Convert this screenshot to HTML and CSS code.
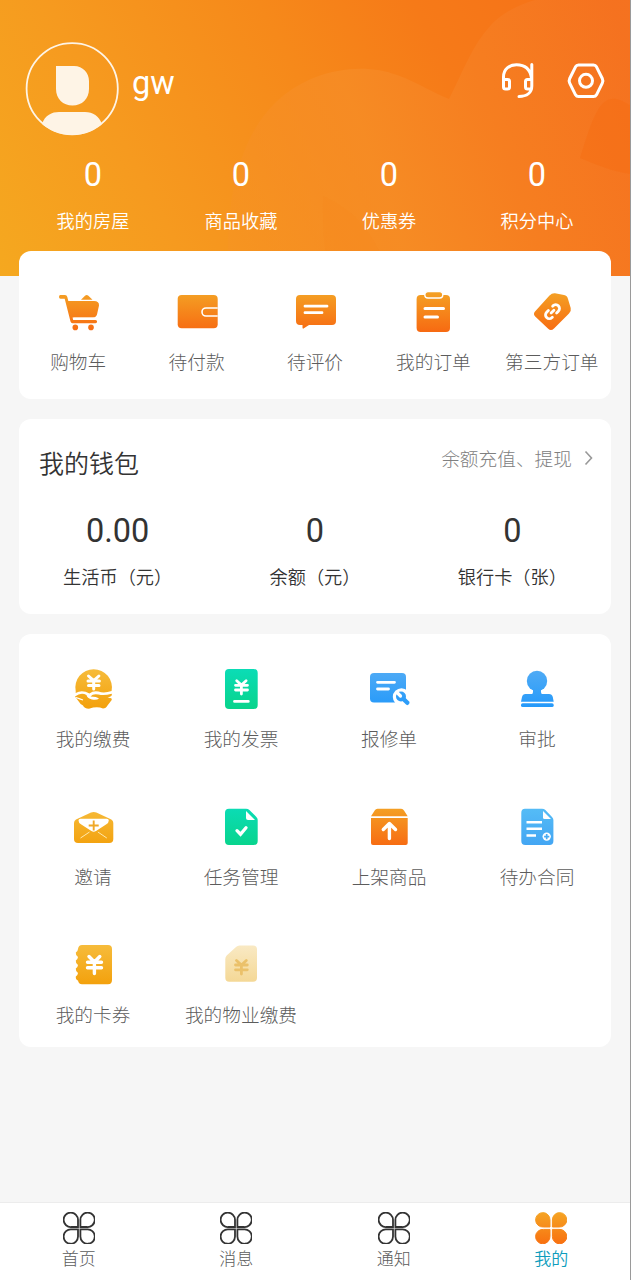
FILE: index.html
```html
<!DOCTYPE html>
<html lang="zh-CN">
<head>
<meta charset="utf-8">
<title>我的</title>
<link rel="stylesheet" href="styles.css">
</head>
<body>
<svg class="defs" width="0" height="0" aria-hidden="true">
  <defs>
    <linearGradient id="or" gradientUnits="userSpaceOnUse" x1="0" y1="5" x2="0" y2="43"><stop offset="0" stop-color="#f4a024"/><stop offset="1" stop-color="#f76b12"/></linearGradient>
    <linearGradient id="ye" gradientUnits="userSpaceOnUse" x1="0" y1="5" x2="0" y2="43"><stop offset="0" stop-color="#f6bb3a"/><stop offset="1" stop-color="#f3a10d"/></linearGradient>
    <linearGradient id="gr" gradientUnits="userSpaceOnUse" x1="0" y1="5" x2="0" y2="43"><stop offset="0" stop-color="#0bdcb5"/><stop offset="1" stop-color="#08d48c"/></linearGradient>
    <linearGradient id="bl" gradientUnits="userSpaceOnUse" x1="0" y1="5" x2="0" y2="43"><stop offset="0" stop-color="#50abf5"/><stop offset="1" stop-color="#2499fa"/></linearGradient>
    <linearGradient id="sk" gradientUnits="userSpaceOnUse" x1="0" y1="5" x2="0" y2="43"><stop offset="0" stop-color="#55bcf6"/><stop offset="1" stop-color="#43a5f3"/></linearGradient>
    <linearGradient id="sa" gradientUnits="userSpaceOnUse" x1="0" y1="5" x2="0" y2="43"><stop offset="0" stop-color="#f9e9c3"/><stop offset="1" stop-color="#f4d793"/></linearGradient>
    <linearGradient id="nv" gradientUnits="userSpaceOnUse" x1="0" y1="0" x2="0" y2="32"><stop offset="0" stop-color="#f5a524"/><stop offset="1" stop-color="#f87010"/></linearGradient>
    <linearGradient id="cloud" gradientUnits="userSpaceOnUse" x1="229" y1="200" x2="631" y2="60"><stop offset="0" stop-color="#f6912a" stop-opacity=".25"/><stop offset=".35" stop-color="#f68d27" stop-opacity=".75"/><stop offset=".65" stop-color="#f67f22" stop-opacity=".8"/><stop offset="1" stop-color="#f57220" stop-opacity=".95"/></linearGradient>
    <g id="clover">
      <path d="M15 15H8.400A7.200 7.200 0 1 1 15 8z"/>
      <path d="M17.400 15H24A7.200 7.200 0 1 0 17.400 8z"/>
      <path d="M15 17.400H8.400A7.200 7.200 0 1 0 15 24.400z"/>
      <path d="M17.400 17.400H24A7.200 7.200 0 1 1 17.400 24.400z"/>
    </g>
  </defs>
</svg>
<div class="screen">
  <header class="hero">
    <svg class="hero-art" width="631" height="276" viewBox="0 0 631 276" aria-hidden="true">
      <path fill="url(#cloud)" d="M229 276C224 203 239 138 275 103C308 70 361 61 397 75C419 83 435 94 449 99C462 74 472 45 491 25C502 13 518 5 535 0H631V276Z"/>
      <path fill="#f66d12" fill-opacity=".45" d="M631 106C615 95 607 97 599 108C590 123 586 140 580 158C595 164 613 172 631 174Z"/>
      <path fill="#f6881a" fill-opacity=".25" d="M323 196C350 209 371 223 389 276H332C322 250 323 218 323 196Z"/>
    </svg>
    <div class="profile">
      <svg class="avatar" width="94" height="94" viewBox="0 0 94 94">
        <clipPath id="face"><circle cx="47" cy="47" r="46"/></clipPath>
        <path clip-path="url(#face)" fill="#fef4e6" d="M31 24H49C58 24 64 31 64 39V47C64 57 57 63.500 47.500 63.500S31 57 31 47ZM17 82C20 73 27 70 34 70H60C68 70 74 74 77 82V94H17Z"/>
        <circle cx="47.200" cy="46.700" r="45.600" fill="none" stroke="#fef4e6" stroke-width="1.800"/>
      </svg>
      <span class="name">gw</span>
      <svg class="tool" width="36" height="40" viewBox="0 0 36 40" fill="none" stroke="#fff" stroke-width="3" stroke-linecap="round" stroke-linejoin="round">
        <path d="M3.500 20V16C3.500 8 9.500 3.800 16.500 3.800C24 3.800 30 7 31.500 17M31.800 3.500V25C31.800 31.500 27 35.500 19 35.500M3.500 18.500H7.500Q9.500 18.500 9.500 20.500V26Q9.500 28 7.500 28H5.500Q3.500 28 3.500 26ZM31.500 18.500H27.500Q25.500 18.500 25.500 20.500V26Q25.500 28 27.500 28H29.500"/>
      </svg>
      <svg class="tool" width="40" height="40" viewBox="0 0 40 40" fill="none" stroke="#fff" stroke-width="3" stroke-linejoin="round">
        <path d="M12.500 4H27.500Q29.500 4 30.500 5.800L36.300 17.500Q37.400 19.800 36.300 22.100L30.500 33.800Q29.500 35.600 27.500 35.600H12.500Q10.500 35.600 9.500 33.800L3.700 22.100Q2.600 19.800 3.700 17.500L9.500 5.800Q10.500 4 12.500 4Z"/><circle cx="20" cy="19.800" r="6.500"/>
      </svg>
    </div>
    <div class="stats">
      <div class="stat"><b>0</b><span>我的房屋</span></div>
      <div class="stat"><b>0</b><span>商品收藏</span></div>
      <div class="stat"><b>0</b><span>优惠券</span></div>
      <div class="stat"><b>0</b><span>积分中心</span></div>
    </div>
  </header>
  <main class="cards">
    <section class="card orders">
      <div class="item"><svg class="icon" viewBox="0 0 48 48"><g fill="url(#or)"><path d="M31 7.700Q32.700 6.300 34.400 7.700L38.500 11.700H27ZM13 13H40Q45.300 13 45 17.500L43 26.500Q42 29.500 39 29.500H18ZM6 7H11Q12.800 7 13.300 9L19.200 32H41.500A1.600 1.600 0 0 1 41.500 35.200H18.500Q17 35.200 16.500 33.500L10.700 10.700H6.500Q5 10.500 5 9T6 7Z"/><circle cx="21.300" cy="39.400" r="2.800"/><circle cx="37" cy="39.400" r="2.800"/></g><path d="M19.500 30.400H40" stroke="#fff" stroke-width="1.600"/></svg><span>购物车</span></div>
      <div class="item"><svg class="icon" viewBox="0 0 48 48"><rect x="4.700" y="7" width="40" height="33.300" rx="4" fill="url(#or)"/><path d="M44.700 20H33A4 4 0 0 0 33 28H44.700" fill="none" stroke="#fff" stroke-width="1.600"/></svg><span>待付款</span></div>
      <div class="item"><svg class="icon" viewBox="0 0 48 48"><path fill="url(#or)" d="M9 7H41Q45 7 45 11V33Q45 37 41 37H18L12.500 40.500Q11.500 41 11.500 39.500V37H9Q5 37 5 33V11Q5 7 9 7Z"/><path d="M14 18.200H36M14 24.700H31" stroke="#fff" stroke-width="2.800" stroke-linecap="round"/></svg><span>待评价</span></div>
      <div class="item"><svg class="icon" viewBox="0 0 48 48"><rect x="7.600" y="7" width="33.400" height="37" rx="4" fill="url(#or)"/><rect x="15.800" y="3.600" width="18" height="6.400" rx="3.200" fill="url(#or)" stroke="#fff" stroke-width="1.400"/><path d="M16 20.600H34.500M16 29H28.500" stroke="#fff" stroke-width="3" stroke-linecap="round"/></svg><span>我的订单</span></div>
      <div class="item"><svg class="icon" viewBox="0 0 48 48"><path fill="url(#or)" d="M7 23.500L21.500 7.500Q24 5 27 5.300L36 7Q39.300 7.700 40 11L42.700 20Q43.500 23 41 25.500L26 40.500Q23 43.500 20.200 40.800L7.200 28.500Q4.800 26 7 23.500Z"/><g fill="none" stroke="#fff" stroke-width="2.800" stroke-linecap="round" transform="rotate(-45 24.500 23.700)"><path d="M20.500 27.500H20A3.800 3.800 0 0 1 20 19.900H22.500M28.500 19.900H29A3.800 3.800 0 0 1 29 27.500H26.500M22.500 23.700H26.500"/></g></svg><span>第三方订单</span></div>
    </section>

    <section class="card wallet">
      <div class="wallet-head">
        <h2>我的钱包</h2>
        <a class="more"><span>余额充值、提现</span><svg width="10" height="16" viewBox="0 0 10 16" fill="none" stroke="#999" stroke-width="1.600"><path d="M1.500 1.500L7.500 8L1.500 14.500"/></svg></a>
      </div>
      <div class="balances">
        <div class="balance"><b>0.00</b><span>生活币（元）</span></div>
        <div class="balance"><b>0</b><span>余额（元）</span></div>
        <div class="balance"><b>0</b><span>银行卡（张）</span></div>
      </div>
    </section>

    <section class="card services">
      <div class="item"><svg class="icon" viewBox="0 0 48 48"><path fill="url(#ye)" d="M6.700 26A18.300 18.300 0 1 1 42.600 26Q35 28.500 29.500 26.500Q24 25.500 20.500 28.500Q13 24.500 6.700 28Z"/><path fill="url(#ye)" d="M6 31.500Q12 27 17.500 30Q18 33 23 34.500Q28 35.300 30 33.500Q27.500 31.500 21.500 31.500Q24 28.300 29.500 29.500Q35 31 42.700 28.700Q44 31 38.500 32.700Q43.500 32.500 42.700 35L38.500 40.500Q37 43.500 34 43.500Q28 41 20 43.800Q15 43.500 14 40.500Q11 39 9 35.500Z"/><path d="M7 32.500Q11 34 14 35" fill="none" stroke="#fff" stroke-width="1.200"/><path d="M19.500 11L24.700 15.700L29.900 11M19 15.900H30.400M19.500 20.600H30M24.700 16V24" fill="none" stroke="#fff" stroke-width="3" stroke-linecap="round"/></svg><span>我的缴费</span></div>
      <div class="item"><svg class="icon" viewBox="0 0 48 48"><rect x="8" y="4" width="32.700" height="40" rx="4" fill="url(#gr)"/><path d="M19.700 15.700L24.400 20L29.100 15.700M18.500 20.300H30.500M18.500 25H30.500M24.400 20V29M17.500 36.400H31.300" fill="none" stroke="#fff" stroke-width="2.800" stroke-linecap="round"/></svg><span>我的发票</span></div>
      <div class="item"><svg class="icon" viewBox="0 0 48 48"><rect x="5" y="8" width="36" height="29.500" rx="4" fill="url(#bl)"/><path d="M12.500 17.300H29.500M12.500 24H23.500" stroke="#fff" stroke-width="2.800" stroke-linecap="round"/><circle cx="36.500" cy="32" r="8.700" fill="#fff"/><path d="M37 32.500L42.300 37.800" stroke="#2d9df9" stroke-width="4.400" stroke-linecap="round"/><circle cx="36" cy="31.500" r="5" fill="url(#bl)"/><path d="M35.500 31L32.500 28" stroke="#fff" stroke-width="3.200" stroke-linecap="round"/></svg><span>报修单</span></div>
      <div class="item"><svg class="icon" viewBox="0 0 48 48"><g fill="url(#bl)"><circle cx="24" cy="16" r="10.200"/><path d="M19 22H29Q27 26 28.700 29H36Q39 29 39.800 32L40.700 36.700H8L9 32Q9.700 29 12.500 29H19.300Q21 26 19 22Z"/><rect x="8" y="38.300" width="32.700" height="3.800" rx="1.700"/></g></svg><span>审批</span></div>
      <div class="item"><svg class="icon" viewBox="0 0 48 48"><path fill="url(#ye)" d="M7 16.500L22 9.500Q24.700 8.300 27.400 9.500L42.300 16.500Q44.300 17.500 44.300 20V36Q44.300 40 40.300 40H9Q5 40 5 36V20Q5 17.500 7 16.500Z"/><path fill="#fff" d="M11.500 15.700H37.800Q39.800 15.700 39.800 17.500Q39.800 20 37 21.500L27 28Q24.700 29.500 22.400 28L12.300 21.500Q9.500 20 9.500 17.500Q9.500 15.700 11.500 15.700Z"/><path d="M24.700 17.500V27.500M19.700 22.500H29.700" stroke="#f0a928" stroke-width="1.900"/><path d="M11.500 35L20.500 29M37.800 35L28.900 29" stroke="#ffe9ae" stroke-width="1"/></svg><span>邀请</span></div>
      <div class="item"><svg class="icon" viewBox="0 0 48 48"><path fill="url(#gr)" d="M12 5.700H29Q31 5.700 32.400 7L39.400 14Q40.700 15.300 40.700 17V38Q40.700 42 36.700 42H12Q8 42 8 38V9.700Q8 5.700 12 5.700Z"/><path fill="#fff" d="M29 8V15Q29 17 31 17H38Z"/><path d="M20 27.700L23.500 31.200L29 24.700" fill="none" stroke="#fff" stroke-width="3.300" stroke-linecap="round"/></svg><span>任务管理</span></div>
      <div class="item"><svg class="icon" viewBox="0 0 48 48"><path fill="url(#or)" d="M12.500 5.700H36.200Q38 5.700 39 7.500L42.700 13.200H6L9.700 7.500Q10.700 5.700 12.500 5.700ZM6 15H42.700V40Q42.700 42 40.700 42H8Q6 42 6 40Z"/><path d="M24.400 35.500V21M18.300 26.500L24.400 20.500L30.500 26.500" fill="none" stroke="#fff" stroke-width="3.400" stroke-linecap="round" stroke-linejoin="round"/></svg><span>上架商品</span></div>
      <div class="item"><svg class="icon" viewBox="0 0 48 48"><path fill="url(#sk)" d="M12 5.700H29Q31 5.700 32.400 7L39 14Q40.400 15.300 40.400 17V38Q40.400 42 36.400 42H12.300Q8.300 42 8.300 38V9.700Q8.300 5.700 12 5.700Z"/><path fill="#fff" d="M30 8V14.500Q30 16 31.500 16H38Z"/><path d="M13.500 19.300H29M13.500 25.700H29M13.500 32.500H23" stroke="#fff" stroke-width="2.400"/><circle cx="33.700" cy="33.600" r="4.200" fill="#fff"/><path d="M33.700 31V36.200M31.100 33.600H36.300" stroke="#4aacf4" stroke-width="1.700"/></svg><span>待办合同</span></div>
      <div class="item"><svg class="icon" viewBox="0 0 48 48"><path fill="url(#ye)" d="M13 4H39Q43 4 43 8V39Q43 43.200 39 43.200H13Q9.500 43.200 9 39.500Q6.500 38.500 6.800 35.500Q8.800 34 9 32Q6.500 30.500 6.800 27.500Q8.800 26 9 24Q6.500 22.500 6.800 19.500Q8.800 18 9 16Q6.500 14.500 6.800 11.500Q8.800 10.500 9 8Q9.500 4 13 4Z"/><path d="M20 15.500L25.400 21L30.800 15.500M18.500 21.300H32.500M18.500 26.700H32.500M25.400 21V32.500" fill="none" stroke="#fff" stroke-width="3.400" stroke-linecap="round"/></svg><span>我的卡券</span></div>
      <div class="item"><svg class="icon" viewBox="0 0 48 48"><path fill="url(#sa)" d="M22.500 4.500H36Q40 4.500 40 8.500V36.700Q40 40.700 36 40.700H12.300Q8.300 40.700 8.300 36.700V18Q8.300 16 9.700 14.500L19 6Q20.500 4.500 22.500 4.500Z"/><path d="M19.500 19.500L24.400 24L29.300 19.500M18.500 24H30.300M18.500 28.800H30.300M24.400 24V33" fill="none" stroke="#ebc16a" stroke-width="2.800" stroke-linecap="round"/></svg><span>我的物业缴费</span></div>
    </section>
  </main>
  <nav class="tabs">
    <a class="tab"><svg class="tab-icon" viewBox="0 0 32 32"><use href="#clover"/></svg><span>首页</span></a>
    <a class="tab"><svg class="tab-icon" viewBox="0 0 32 32"><use href="#clover"/></svg><span>消息</span></a>
    <a class="tab"><svg class="tab-icon" viewBox="0 0 32 32"><use href="#clover"/></svg><span>通知</span></a>
    <a class="tab active"><svg class="tab-icon" viewBox="0 0 32 32"><use href="#clover"/></svg><span>我的</span></a>
  </nav>
</div>
</body>
</html>
```
FILE: styles.css
```css
* { box-sizing: border-box; }
body { margin: 0; background: #f6f6f6; font-family: Roboto, "Noto Sans CJK SC", sans-serif; color: #333; }
b, h2 { font-weight: 400; margin: 0; }
svg { display: block; flex: none; }
.defs { position: absolute; }
.screen { width: 631px; height: 1280px; display: flex; flex-direction: column; border-right: 1px solid #9a9a9a; overflow: hidden; }

.hero { position: relative; flex: none; height: 276px; color: #fff; padding-top: 42px; background: linear-gradient(62deg, #f5a81f 0%, #f69a1f 25%, #f6891a 52%, #f67a18 72%, #f66f18 100%); }
.hero-art { position: absolute; left: 0; top: 0; }
.profile { position: relative; display: flex; align-items: flex-start; height: 94px; padding: 0 24px 0 25px; }
.name { flex: 1; margin-left: 13px; font-size: 32.500px; line-height: 40px; padding-top: 21px; }
.tool { margin-top: 19px; }
.tool + .tool { margin-left: 30px; }
.stats { position: relative; display: grid; grid-template-columns: repeat(4, 148px); padding: 19px 0 0 19px; }
.stat, .balance, .item, .tab { display: flex; flex-direction: column; align-items: center; white-space: nowrap; }
.stat b, .balance b { font-size: 32.500px; line-height: 40px; }
.stat span, .balance span { font-size: 18.200px; line-height: 26px; font-weight: 350; }
.stat span { margin-top: 14px; }

.cards { position: relative; flex: 1; margin-top: -25px; padding: 0 19px; display: flex; flex-direction: column; gap: 20px; }
.card { width: 592px; background: #fff; border-radius: 12px; }
.icon { width: 48px; height: 48px; }
.item span { font-size: 18.700px; line-height: 26px; font-weight: 300; color: #5c5c5c; margin-top: 14px; }
.orders { display: grid; grid-template-columns: repeat(5, 1fr); height: 148px; padding-top: 37px; }
.wallet { height: 195px; padding-top: 22px; }
.wallet-head { display: flex; justify-content: space-between; padding: 0 17px 0 20px; height: 66px; }
.wallet-head h2 { font-size: 25px; line-height: 48px; font-weight: 350; }
.more { display: flex; align-items: center; gap: 12px; height: 34px; font-size: 18.700px; line-height: 26px; font-weight: 300; color: #808080; }
.more span { padding-top: 4px; }
.balances { display: grid; grid-template-columns: repeat(3, 1fr); padding-top: 4px; }
.balance span { margin-top: 14px; }
.services { display: grid; grid-template-columns: repeat(4, 1fr); grid-auto-rows: 138px; height: 413px; padding-top: 31px; }

.tabs { flex: none; height: 78px; background: #fff; border-top: 1px solid #ececec; display: grid; grid-template-columns: repeat(4, 1fr); padding-top: 9px; }
.tab { color: #5c5c5c; font-size: 17px; line-height: 24px; font-weight: 300; }
.tab span { margin-top: 3px; }
.tab-icon { width: 32px; height: 32px; fill: none; stroke: #333; stroke-width: 1.800; }
.active { color: #0e9dbd; font-weight: 350; }
.active .tab-icon { fill: url(#nv); stroke: url(#nv); stroke-width: 1; }
```
